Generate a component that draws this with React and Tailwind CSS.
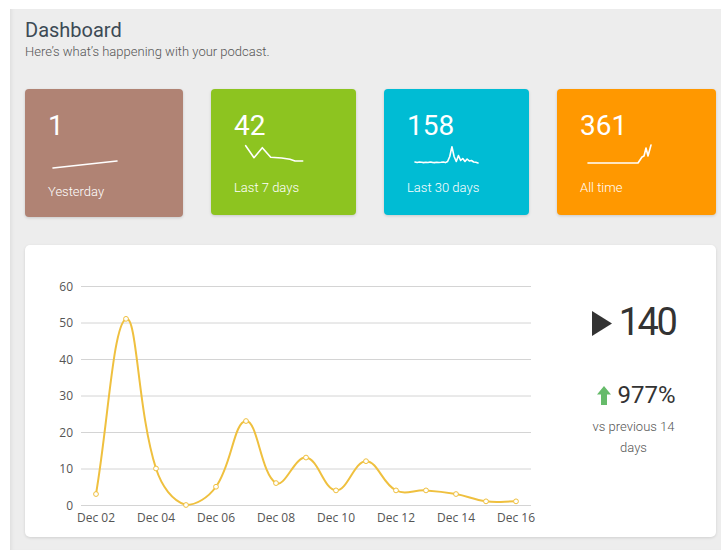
import React from "react";

const DAYS = ["Dec 02","Dec 03","Dec 04","Dec 05","Dec 06","Dec 07","Dec 08","Dec 09","Dec 10","Dec 11","Dec 12","Dec 13","Dec 14","Dec 15","Dec 16"];
const PLAYS = [3, 51, 10, 0, 5, 23, 6, 13, 4, 12, 4, 4, 3, 1, 1];

// chart geometry (svg-local coordinates)
const X0 = 71;
const STEP = 30;
const Y_BASE = 260;
const Y_TOP = 41;
const UNIT = (Y_BASE - Y_TOP) / 60;
const GRID_L = 56;
const GRID_R = 506;

function splinePath(pts, tension = 0.4) {
  const cps = pts.map((cur, i) => {
    const prev = pts[i - 1] || cur;
    const next = pts[i + 1] || cur;
    const d01 = Math.hypot(cur.x - prev.x, cur.y - prev.y);
    const d12 = Math.hypot(next.x - cur.x, next.y - cur.y);
    let s01 = d01 / (d01 + d12);
    let s12 = d12 / (d01 + d12);
    s01 = isNaN(s01) ? 0 : s01;
    s12 = isNaN(s12) ? 0 : s12;
    const fa = tension * s01;
    const fb = tension * s12;
    const clampY = (y) => Math.max(Y_TOP, Math.min(Y_BASE, y));
    return {
      p: { x: cur.x - fa * (next.x - prev.x), y: clampY(cur.y - fa * (next.y - prev.y)) },
      n: { x: cur.x + fb * (next.x - prev.x), y: clampY(cur.y + fb * (next.y - prev.y)) },
    };
  });
  let d = `M${pts[0].x},${pts[0].y}`;
  for (let i = 1; i < pts.length; i++) {
    const a = cps[i - 1].n;
    const b = cps[i].p;
    d += ` C${a.x},${a.y} ${b.x},${b.y} ${pts[i].x},${pts[i].y}`;
  }
  return d;
}

function PlaysChart() {
  const pts = PLAYS.map((v, i) => ({ x: X0 + i * STEP, y: Y_BASE - v * UNIT }));
  const ticks = [0, 10, 20, 30, 40, 50, 60];
  const labelFont = { fontFamily: '"Open Sans", "Noto Sans", sans-serif', fontSize: 12 };
  return (
    <svg width="526" height="292" className="block shrink-0">
      {ticks.map((t) => {
        const y = Y_BASE - t * UNIT;
        return (
          <g key={t}>
            <line x1={GRID_L} x2={GRID_R} y1={y + 0.5} y2={y + 0.5} stroke="#d4d4d4" strokeWidth="1" />
            <text x="48" y={y + 4.5} textAnchor="end" fill="#555" style={labelFont}>{t}</text>
          </g>
        );
      })}
      {DAYS.map((d, i) =>
        i % 2 === 0 ? (
          <text key={d} x={X0 + i * STEP} y="277" textAnchor="middle" fill="#555" style={labelFont}>{d}</text>
        ) : null
      )}
      <path d={splinePath(pts)} fill="none" stroke="#efc03f" strokeWidth="2" />
      {pts.map((p, i) => (
        <circle key={i} cx={p.x} cy={p.y} r="2.4" fill="#fff" stroke="#efc03f" strokeWidth="1" />
      ))}
    </svg>
  );
}

function Spark({ points, h = 22 }) {
  return (
    <svg width="80" height={h} className="block mt-[3px]">
      <polyline
        points={points.map((p) => p.join(",")).join(" ")}
        fill="none"
        stroke="#fff"
        strokeWidth="1.6"
        strokeLinejoin="round"
        strokeLinecap="round"
      />
    </svg>
  );
}

const thirtyDays = [19, 19.5, 19, 19.3, 19.6, 19.2, 19.5, 19, 19.4, 19.6, 19.2, 19.5, 19.3, 19, 19.6, 18.5, 13.5, 3.7, 13.5, 18.5, 12.5, 17.5, 15.5, 18.5, 16, 18, 17.5, 19, 19.3, 20].map(
  (y, i) => [8 + i * (63 / 29), y]
);

function StatCard({ value, label, color, width, sparkPts, sparkH = 22, pb = "pb-[18px]" }) {
  return (
    <div
      className={`${color} ${width} ${pb} rounded-[4px] pt-[23px] pl-[23px] text-white shadow-[0_1px_3px_rgba(0,0,0,0.15)]`}
    >
      <div className="text-[28px] leading-[28px]">{value}</div>
      <Spark points={sparkPts} h={sparkH} />
      <div className="mt-[14px] text-[13px] leading-[18px] font-light">{label}</div>
    </div>
  );
}

export default function App() {
  return (
    <div className="min-h-[550px] bg-white pt-[9px] pl-[10px]" style={{ fontFamily: 'Roboto, "Noto Sans", sans-serif' }}>
      <div className="min-h-[541px] bg-[#ededed] pt-[10px] pl-[15px] pr-[5px] shadow-[inset_4px_0_4px_-3px_rgba(0,0,0,0.08)]">
        <h1 className="text-[20px] leading-[22px] text-[#3c4a55]">Dashboard</h1>
        <p className="mt-[2px] text-[13px] leading-[18px] font-light text-[#555]">Here’s what’s happening with your podcast.</p>

        <div className="mt-[28px] flex items-start gap-[28px]">
          <StatCard
            value="1"
            label="Yesterday"
            color="bg-[#b08374]"
            width="w-[158px]"
            sparkH={26}
            pb="pb-[16px]"
            sparkPts={[[5, 25], [69, 18]]}
          />
          <StatCard
            value="42"
            label="Last 7 days"
            color="bg-[#8dc420]"
            width="w-[145px]"
            sparkPts={[[11.7, 2.7], [20, 14.7], [28.3, 4.7], [36.7, 14.3], [47.7, 15], [56, 16.3], [61, 18], [68.7, 18]]}
          />
          <StatCard value="158" label="Last 30 days" color="bg-[#00bcd4]" width="w-[145px]" sparkPts={thirtyDays} />
          <StatCard
            value="361"
            label="All time"
            color="bg-[#ff9800]"
            width="w-[159px]"
            sparkPts={[[8, 20], [58, 20], [62, 14], [64, 13], [66, 5], [68, 13], [71, 2]]}
          />
        </div>

        <div className="mt-[28px] flex h-[292px] w-[691px] rounded-[5px] bg-white shadow-[0_1px_3px_rgba(0,0,0,0.12)]">
          <PlaysChart />
          <div className="flex flex-1 flex-col items-center pt-[55px] text-[#333]">
            <div className="flex items-center gap-[7px]">
              <svg width="20" height="25" viewBox="0 0 20 25" className="mt-[2px]">
                <polygon points="0,0 20,12.5 0,25" fill="#333" />
              </svg>
              <span className="text-[38px] leading-[44px] tracking-[-2.5px]">140</span>
            </div>
            <div className="mt-[37px] flex items-center gap-[6px] pl-[6px]">
              <svg width="14" height="19" viewBox="0 0 14 19">
                <polygon points="7,0 14,8.5 10,8.5 10,19 4,19 4,8.5 0,8.5" fill="#66bb6a" />
              </svg>
              <span className="text-[24px] leading-[28px]">977%</span>
            </div>
            <p className="mt-[7px] w-[100px] text-center text-[13px] leading-[21px] font-light text-[#555]">
              vs previous 14 days
            </p>
          </div>
        </div>
      </div>
    </div>
  );
}
